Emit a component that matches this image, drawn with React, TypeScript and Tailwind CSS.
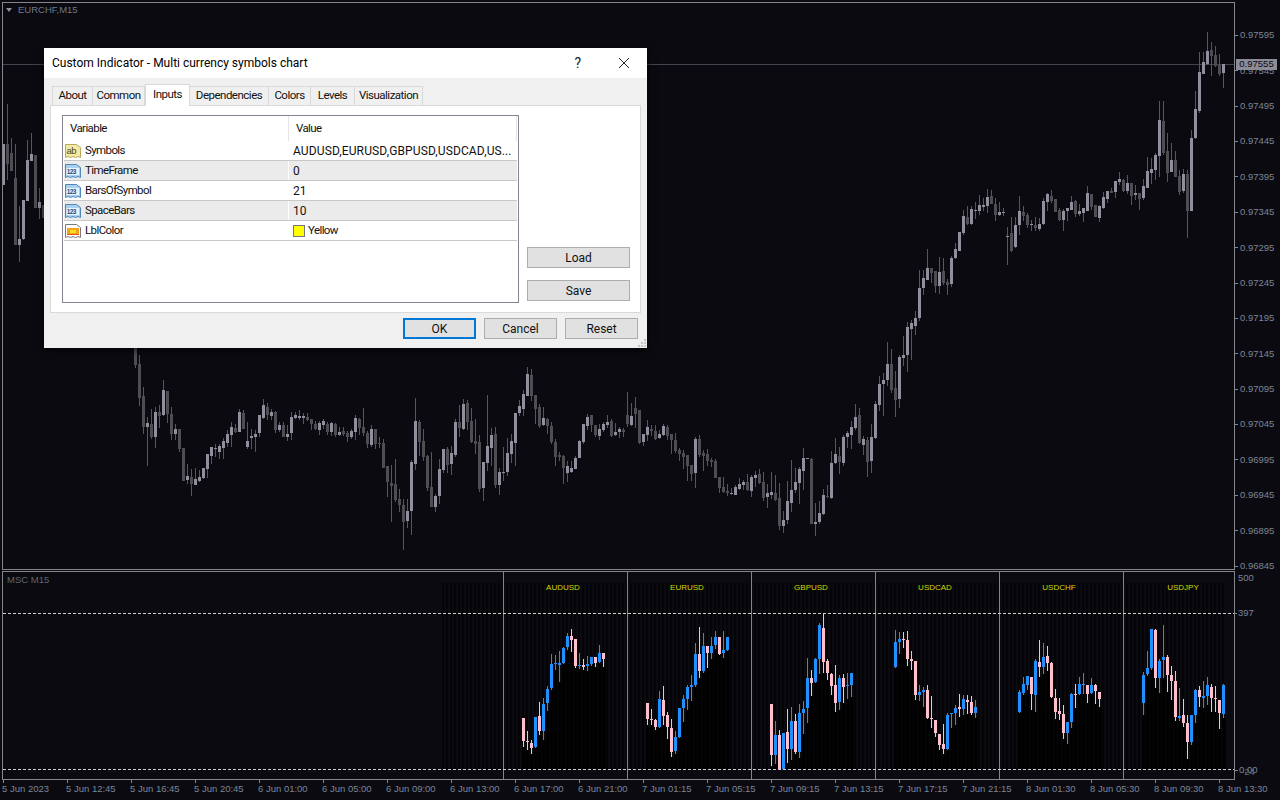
const BG = '#0a0a10';

type Candle = { x: number; k: string; t: number; b: number; wt: number; wb: number };

// one segment per line group: kind, body top, body bottom, wick top, wick bottom (values are 3x zoom px)
function seg(x0: number, y0: number, s: string): Candle[] {
  return s
    .trim()
    .split(',')
    .map((row, i) => {
      const [k, t, b, wt, wb] = row.trim().split(' ');
      return {
        x: x0 + i * 4,
        k,
        t: y0 + Math.round(+t / 3),
        b: y0 + Math.round(+b / 3),
        wt: y0 + Math.round(+wt / 3),
        wb: y0 + Math.round(+wb / 3),
      };
    });
}

const mainCandles: Candle[] = [
  ...seg(3, 0, `l 432 555 432 555,d 432 492 312 540,d 459 513 414 513,d 534 735 432 735,l 717 735 618 786,l 600 717 600 720,l 480 603 420 603,l 462 483 399 483,d 465 624 465 624,l 606 624 564 657,d 615 655 615 655`),
  ...seg(135, 340, `d 24 75 24 84,d 72 174 45 198,d 168 261 141 282,l 249 261 232 378,d 252 291 207 297,l 216 291 201 324,d 216 228 195 264,l 150 225 120 228,d 153 222 153 249,d 222 282 201 300,l 267 282 252 300,d 267 327 267 336,d 324 423 324 423,l 408 420 372 432,d 411 432 387 468,l 417 435 384 435,l 411 423 390 426,l 384 414 384 417,l 342 387 342 414,l 321 348 321 372,l 324 327 312 351,l 318 336 312 357,l 303 324 294 357,l 282 309 270 321,l 261 285 246 321,d 264 276 252 279,l 216 276 207 276,d 219 267 210 267,l 303 321 246 327,l 288 294 267 327,l 282 291 270 336,l 225 279 225 291,l 195 234 177 237,d 201 225 189 240,l 216 228 207 240,d 216 270 213 279,l 255 270 246 276,d 255 291 246 291,l 282 291 255 303,l 231 279 216 300,l 225 234 216 237,l 228 234 210 240,l 228 234 219 252,d 231 240 219 243,d 237 252 237 270,d 252 267 243 270,l 249 270 243 285,l 243 255 237 267,d 252 276 246 285,l 249 276 246 288,d 252 285 249 291,l 276 285 261 288,d 273 282 261 288,d 279 291 273 306,l 273 291 267 297,l 234 276 225 300,d 237 264 234 285,d 261 279 204 288,d 279 312 273 324,l 267 315 255 321,d 267 312 267 327,d 309 312 291 324,d 309 384 297 384,d 378 426 378 471,d 429 438 375 546,d 432 480 357 486,d 477 495 447 516,d 495 546 477 630,l 513 543 477 564,l 366 513 360 585,l 243 372 174 390,d 246 306 240 348,d 303 351 267 363,d 348 444 345 453,d 441 501 336 501,l 468 501 462 516,l 387 468 357 492`),
  ...seg(443, 340, `l 327 390 327 399,d 327 375 321 399,l 339 372 318 405,l 246 345 237 351,d 246 264 195 291,l 192 267 177 270,d 189 246 180 270,d 243 306 204 309,d 303 312 237 342,d 306 447 285 456,l 366 444 366 483,l 318 369 165 393,l 285 324 264 378,d 282 435 261 444,l 396 435 384 465,l 396 399 321 423,l 339 396 294 408,l 303 342 282 369,l 219 309 219 378,l 198 219 180 228,l 162 207 150 228,l 102 168 81 168,d 105 168 87 183,d 165 207 165 252,d 201 258 192 264,l 234 255 201 258,d 237 258 234 282,d 258 306 246 312,d 306 351 297 378,d 345 351 336 363,d 348 384 345 432,l 378 399 363 426,l 384 396 363 399,l 354 387 348 387,l 303 354 300 354,l 252 306 252 312,l 231 258 222 270,d 225 255 225 276,d 255 285 255 291,l 267 288 252 300,l 252 270 246 276,l 246 255 225 264,d 243 288 237 291,l 276 285 249 288,l 267 276 261 294,d 270 276 264 291,d 225 252 156 261,l 228 255 189 258,d 204 222 171 264,d 210 309 210 312,l 282 306 282 318,l 261 285 240 303,d 267 273 255 288,d 273 297 255 300,l 282 294 270 297,l 258 285 252 288,d 261 288 255 300,d 282 300 282 342,d 300 333 279 339,d 330 342 324 363,d 339 351 330 387,d 345 378 345 423,d 375 402 375 423,l 297 399 291 444,d 297 345 285 351,d 339 348 330 393,d 342 363 327 378,d 360 366 354 381,d 363 414 357 414,d 411 444 411 459,d 441 456 411 459,d 453 459 432 468,l 459 462 444 465,l 441 465 435 465,l 432 447 414 450,l 426 435 420 450,d 426 450 402 453,l 411 453 405 471,l 405 414 393 441,d 402 429 387 432,d 426 474 396 483,l 459 471 432 504,l 456 465 396 477,d 459 480 405 483,d 474 558 429 570,l 540 558 513 579,l 483 540 423 552,l 450 489 360 516,l 426 450 384 459,l 387 429 381 492,l 354 393 324 450,l 354 357 354 357,d 357 552 354 552,l 546 552 489 588,l 519 546 483 552,l 465 522 447 525,d 468 471 435 474,l 369 474 333 477,l 342 369 294 372,d 348 366 321 402,l 291 369 285 378,l 279 291 273 324,l 261 285 243 327,l 231 264 192 270,d 225 309 204 312,l 297 315 288 345,d 300 366 291 411,l 291 363 252 399,l 192 294 183 297,l 132 195 108 213`),
  ...seg(883, 180, `l 600 612 579 708,l 552 600 486 618,d 552 630 507 639,d 624 660 573 711,l 531 657 525 684,l 525 534 468 558,l 441 525 426 576,l 429 447 420 540,l 414 438 393 465,l 324 414 270 423,l 294 324 270 345,l 264 300 207 300,d 264 279 264 309,d 273 318 273 339,l 276 318 231 342,d 273 309 234 315,d 306 315 297 345,l 234 312 228 321,l 207 234 189 237,l 156 213 156 213,l 108 159 90 165,d 111 132 78 135,l 87 132 78 135,l 90 93 66 117,l 75 93 45 105,l 75 81 54 93,l 51 78 27 99,d 48 72 30 72,d 72 105 54 123,l 96 105 66 108,l 96 99 84 108,l 168 171 141 255,d 159 213 111 216,l 135 201 111 204,l 93 135 48 165,d 96 108 78 123,d 105 135 99 144,l 132 135 120 153,d 135 144 111 153,l 132 147 114 153,l 63 132 54 135,l 42 66 39 93,d 48 63 30 69,d 57 96 57 96,d 90 120 84 123,l 93 120 87 153,l 84 93 84 123,l 66 90 48 90,d 63 102 60 111,l 93 102 72 108,l 84 99 84 126,l 39 93 18 93,d 42 81 42 90,d 75 111 75 111,l 78 114 75 126,l 51 84 36 87,l 33 57 33 69,d 33 39 24 39,l 3 36 3 54`),
  ...seg(1119, 0, `l 537 546 516 555,d 540 573 537 576,l 549 573 525 582,d 549 588 549 615,l 579 585 555 600,d 579 597 579 630,l 558 594 537 600,l 513 564 471 564,l 507 519 474 552,l 465 510 459 540,l 360 468 303 531,d 363 459 303 465,d 453 519 399 546,l 480 516 429 516,d 480 531 453 531,d 528 576 510 585,l 522 573 507 579,d 522 633 510 714,l 414 633 390 633,l 327 414 273 417,l 216 333 156 339,l 186 222 156 222,l 153 192 96 195,d 150 168 126 228,d 165 198 138 201,d 195 222 162 228,l 192 219 192 264`),
];

const panes = [
  { name: 'AUDUSD', cx: 563, candles: seg(523, 565, `p 459 528 459 546,p 528 531 498 555,p 534 549 525 567,b 456 546 456 549,p 453 498 411 510,b 417 498 399 525,b 372 414 363 438,b 297 369 267 375,b 294 296 270 315,b 294 300 258 351,b 249 294 246 297,b 213 246 204 255,p 213 225 192 261,p 222 303 222 309,b 300 303 264 312,p 300 306 282 315,b 297 303 273 318,b 276 297 276 303,p 276 294 276 306,b 264 291 240 294,p 264 282 264 306`) },
  { name: 'EURUSD', cx: 687, candles: seg(647, 565, `p 414 462 414 480,p 462 465 432 480,p 465 486 462 495,b 402 486 378 489,p 405 453 363 480,p 450 486 441 522,p 489 561 462 576,b 516 558 498 567,b 429 516 429 519,b 402 429 390 471,b 366 402 360 435,b 360 366 330 408,b 267 360 234 366,p 267 318 186 339,b 243 318 204 324,p 243 264 243 309,b 243 264 216 282,b 216 240 198 252,p 216 267 216 270,b 255 264 198 279,b 216 255 216 258`) },
  { name: 'GBPUSD', cx: 811, candles: seg(771, 565, `p 417 570 417 603,b 510 570 468 597,p 510 613 495 613,b 504 613 504 613,p 501 552 432 594,b 468 552 426 585,p 468 561 447 567,b 444 561 417 579,b 432 444 408 507,b 339 429 279 474,p 339 354 315 393,b 282 351 279 354,b 180 282 174 327,p 189 291 147 324,p 288 324 282 345,p 327 363 324 390,p 360 414 300 441,b 339 411 330 435,p 339 366 327 414,b 360 363 324 402,b 324 360 324 396`) },
  { name: 'USDCAD', cx: 935, candles: seg(895, 565, `b 231 306 195 309,b 222 231 201 267,p 222 224 201 249,p 225 282 198 303,p 282 288 258 315,p 288 390 288 405,b 381 390 360 408,b 375 381 366 426,p 375 459 360 462,p 459 462 393 489,p 465 504 465 516,p 507 540 507 555,p 537 552 477 567,b 450 552 444 555,b 444 447 444 489,b 429 444 420 480,p 426 432 387 456,b 402 432 390 450,p 405 411 390 447,p 411 444 393 450,b 426 444 405 459`) },
  { name: 'USDCHF', cx: 1059, candles: seg(1019, 565, `b 381 441 375 444,b 357 384 336 390,b 333 360 333 375,p 336 387 336 435,b 288 390 282 441,p 291 306 225 336,b 276 306 234 327,p 273 294 243 318,p 294 396 291 399,p 399 441 372 462,p 438 447 399 465,p 447 504 420 522,b 471 504 471 537,b 387 471 384 489,p 387 390 357 429,b 357 387 336 390,b 357 360 324 387,p 360 387 360 414,b 360 384 339 387,p 360 378 357 417,p 381 402 381 426`) },
  { name: 'USDJPY', cx: 1183, candles: seg(1143, 565, `b 330 414 321 450,b 309 327 258 333,b 192 309 192 315,p 195 339 192 369,b 288 339 282 384,b 276 285 180 339,p 276 330 270 381,p 330 348 303 405,p 348 456 318 468,b 453 459 369 468,p 450 474 402 486,p 474 531 450 582,b 450 531 450 540,b 375 450 372 474,p 375 396 363 426,b 393 399 348 429,b 360 393 336 420,p 366 399 357 441,p 399 402 363 441,p 405 444 405 492,b 360 447 357 459`) },
];

const subCandles = panes.flatMap((p) => p.candles);
const stripes = Array.from({ length: 196 }, (_, i) => 443 + i * 4);

const prices = ['0.97595', '0.97545', '0.97495', '0.97445', '0.97395', '0.97345', '0.97295', '0.97245', '0.97195', '0.97145', '0.97095', '0.97045', '0.96995', '0.96945', '0.96895', '0.96845'];
const times = ['5 Jun 2023', '5 Jun 12:45', '5 Jun 16:45', '5 Jun 20:45', '6 Jun 01:00', '6 Jun 05:00', '6 Jun 09:00', '6 Jun 13:00', '6 Jun 17:00', '6 Jun 21:00', '7 Jun 01:15', '7 Jun 05:15', '7 Jun 09:15', '7 Jun 13:15', '7 Jun 17:15', '7 Jun 21:15', '8 Jun 01:30', '8 Jun 05:30', '8 Jun 09:30', '8 Jun 13:30'];
const tabs = ['About', 'Common', 'Inputs', 'Dependencies', 'Colors', 'Levels', 'Visualization'];
const tabWidths = ['w-[41px]', 'w-[52px]', 'w-[45px]', 'w-[79px]', 'w-[42px]', 'w-[44px]', 'w-[68px]'];

function MainChart() {
  return (
    <svg viewBox="3 3 1231 566" width={1231} height={566} shapeRendering="crispEdges" className="block">
      <rect x={3} y={64} width={1231} height={1} fill="#44444e" />
      {mainCandles.map((c) => (
        <g key={c.x}>
          <rect x={c.x} y={c.wt} width={1} height={Math.max(1, c.wb - c.wt)} fill="#56565c" />
          <rect x={c.x - 1} y={c.t} width={3} height={Math.max(1, c.b - c.t)} fill={c.k === 'l' ? '#8f8f9e' : '#4e4e52'} />
        </g>
      ))}
    </svg>
  );
}

function SubChart() {
  return (
    <svg viewBox="3 572 1231 207" width={1231} height={207} shapeRendering="crispEdges" className="block">
      {stripes.map((x) => (
        <rect key={x} x={x - 1} y={583} width={2} height={186} fill="#040407" />
      ))}
      {subCandles.map((c) => (
        <g key={c.x}>
          <rect x={c.x - 1} y={c.wb} width={4} height={769 - c.wb} fill="#06060a" />
          <rect x={c.x - 1} y={c.wb} width={3} height={769 - c.wb} fill="#000" />
        </g>
      ))}
      {[503, 627, 751, 875, 999, 1123].map((x) => (
        <rect key={x} x={x} y={572} width={1} height={207} fill="#85858c" />
      ))}
      <path d="M3 613.5H1234M3 769.5H1234" stroke="#d0d0d0" strokeDasharray="3 2" fill="none" />
      {subCandles.map((c) => {
        const col = c.k === 'p' ? '#ffc0cb' : '#1e90ff';
        return (
          <g key={c.x}>
            <rect x={c.x} y={c.wt} width={1} height={Math.max(1, c.wb - c.wt)} fill={col} />
            <rect x={c.x - 1} y={c.t} width={3} height={Math.max(1, c.b - c.t)} fill={col} />
          </g>
        );
      })}
      {panes.map((p) => (
        <text key={p.name} x={p.cx} y={590} textAnchor="middle" fontSize={8} fill="#d4d800" fontFamily="'Liberation Sans', sans-serif" shapeRendering="auto">
          {p.name}
        </text>
      ))}
    </svg>
  );
}

function DocIcon({ kind }: { kind: 'ab' | 'num' | 'color' }) {
  const fill = kind === 'ab' ? '#f5e9a6' : kind === 'num' ? '#a9d0ef' : '#ffffff';
  const stroke = kind === 'ab' ? '#b9a95c' : kind === 'num' ? '#4f86b5' : '#7a7a7a';
  return (
    <svg width={16} height={16} viewBox="0 0 16 16" className="shrink-0">
      <path d="M0.5 1.5H11.5L15.5 4.5V14.5L13 13.5L10.5 14.5L8 13.5L5.5 14.5L3 13.5L0.5 14.5Z" fill={fill} stroke={stroke} />
      {kind === 'ab' && (
        <text x={1.5} y={11} fontSize={9.5} fill="#4a4a20" fontFamily="'Liberation Sans', sans-serif">ab</text>
      )}
      {kind === 'num' && (
        <>
          <rect x={1.5} y={5} width={12.5} height={7} fill="#e8f3fb" />
          <text x={1.8} y={11} fontSize={6.5} fontWeight={700} fill="#1d4f80" fontFamily="'Liberation Sans', sans-serif">123</text>
        </>
      )}
      {kind === 'color' && (
        <>
          <rect x={2} y={5} width={12} height={6} fill="#f7a21b" />
          <rect x={5} y={7} width={6} height={3} fill="#f2e21a" />
          <rect x={2} y={11} width={12} height={1} fill="#e8501a" />
        </>
      )}
    </svg>
  );
}

const rows: { name: string; value: string; icon: 'ab' | 'num' | 'color' }[] = [
  { name: 'Symbols', value: 'AUDUSD,EURUSD,GBPUSD,USDCAD,US...', icon: 'ab' },
  { name: 'TimeFrame', value: '0', icon: 'num' },
  { name: 'BarsOfSymbol', value: '21', icon: 'num' },
  { name: 'SpaceBars', value: '10', icon: 'num' },
  { name: 'LblColor', value: 'Yellow', icon: 'color' },
];

function Btn({ label, primary, wide }: { label: string; primary?: boolean; wide?: boolean }) {
  return (
    <button
      className={`flex h-[21px] items-center justify-center bg-[#e1e1e1] text-[12px] text-[#111] ${wide ? 'w-[103px]' : 'w-[73px]'} ${primary ? 'border-2 border-[#0078d7]' : 'border border-[#adadad]'}`}
    >
      {label}
    </button>
  );
}

function Dialog() {
  return (
    <div className="absolute left-[44px] top-[48px] flex h-[300px] w-[603px] flex-col bg-[#f0f0f0] font-['Roboto',sans-serif] text-[12px] text-[#111] shadow-[0_2px_8px_rgba(0,0,0,0.7)]">
      <div className="flex h-[30px] shrink-0 items-center bg-white pl-[8px]">
        <span className="text-[12px] text-black">Custom Indicator - Multi currency symbols chart</span>
        <span className="ml-auto mr-[37px] text-[14px] text-[#222]">?</span>
        <svg width={12} height={12} viewBox="0 0 12 12" className="mr-[17px]">
          <path d="M1 1L11 11M11 1L1 11" stroke="#222" strokeWidth={1} />
        </svg>
      </div>
      <div className="flex h-[27px] shrink-0 items-end pl-[8px] text-[11.5px] tracking-[-0.5px]">
        {tabs.map((t, i) => (
          <div
            key={t}
            className={`flex items-center justify-center border border-[#d9d9d9] ${tabWidths[i]} ${t === 'Inputs' ? 'relative z-10 -mb-px h-[22px] border-b-0 bg-white pb-[2px]' : 'h-[19px] border-b-0 border-l-0 bg-[#f0f0f0] first:border-l'}`}
          >
            {t}
          </div>
        ))}
      </div>
      <div className="mx-[6px] flex h-[208px] shrink-0 border border-[#d9d9d9] bg-white pl-[11px] pt-[9px]">
        <div className="h-[188px] w-[457px] shrink-0 border border-[#82878f]">
          <div className="flex h-[25px] items-center text-[11.5px] tracking-[-0.6px]">
            <div className="flex h-full w-[226px] items-center border-r border-[#e5e5e5] pl-[7px]">Variable</div>
            <div className="flex h-full w-[228px] items-center border-r border-[#e5e5e5] pl-[7px]">Value</div>
          </div>
          {rows.map((r, i) => (
            <div
              key={r.name}
              className={`ml-px mr-px flex h-[20px] items-center border-b border-[#c8c8c8] ${i % 2 === 1 ? 'bg-[#ebebeb]' : 'bg-white'}`}
            >
              <div className="flex h-full w-[225px] items-center gap-[4px] border-r border-white pl-[1px] text-[11.5px] tracking-[-0.6px]">
                <DocIcon kind={r.icon} />
                {r.name}
              </div>
              <div className={`flex h-full items-center gap-[3px] pl-[4px] ${r.icon === 'color' ? 'text-[11.5px] tracking-[-0.6px]' : 'tracking-[0.12px]'}`}>
                {r.icon === 'color' && <span className="h-[12px] w-[12px] border border-[#777] bg-[#ffff00]" />}
                {r.value}
              </div>
            </div>
          ))}
        </div>
        <div className="ml-[8px] flex flex-col gap-[12px] pt-[132px]">
          <Btn label="Load" wide />
          <Btn label="Save" wide />
        </div>
      </div>
      <div className="mt-[5px] flex justify-end gap-[8px] pr-[9px]">
        <Btn label="OK" primary />
        <Btn label="Cancel" />
        <Btn label="Reset" />
      </div>
      <svg width={9} height={9} viewBox="0 0 9 9" className="absolute bottom-[1px] right-[1px]" shapeRendering="crispEdges">
        <path d="M7 1h2v2H7zM4 4h2v2H4zM7 4h2v2H7zM1 7h2v2H1zM4 7h2v2H4zM7 7h2v2H7z" fill="#c4c4c4" />
      </svg>
    </div>
  );
}

export default function App() {
  return (
    <div className="relative flex h-[800px] w-[1280px] flex-col overflow-hidden bg-[#0a0a10] font-['Liberation_Sans',sans-serif] text-[9.5px] text-[#7c8698]" style={{ backgroundColor: BG }}>
      <div className="flex h-[570px] shrink-0 pt-[2px]">
        <div className="relative ml-[2px] h-[568px] w-[1233px] shrink-0 border border-[#85858c]">
          <MainChart />
          <div className="absolute left-[3px] top-0 flex items-center gap-[6px] text-[#6f7988]">
            <span className="h-0 w-0 border-x-[3px] border-t-[4px] border-x-transparent border-t-[#8a8f98]" />
            EURCHF,M15
          </div>
        </div>
        <div className="relative flex flex-col pt-[15.6px]">
          {prices.map((p) => (
            <div key={p} className="flex h-[35.4px] shrink-0 items-center gap-[2px]">
              <span className="h-px w-[3px] bg-[#85858c]" />
              {p}
            </div>
          ))}
          <div className="absolute left-[1px] top-[57px] flex h-[11px] w-[41px] items-center justify-center bg-[#8c8c98] text-[#0a0a10]">
            0.97555
          </div>
        </div>
      </div>
      <div className="mt-px flex h-[209px] shrink-0">
        <div className="relative ml-[2px] w-[1233px] shrink-0 border border-[#85858c]">
          <SubChart />
          <span className="absolute left-[4px] top-[1px] text-[#5f6672]">MSC M15</span>
        </div>
        <div className="relative flex-1">
          <div className="flex h-[14px] items-center pl-[3px]">500</div>
          <div className="mt-[21px] flex h-[14px] items-center gap-[1px]">
            <span className="h-px w-[2px] bg-[#85858c]" />397
          </div>
          <div className="mt-[143px] flex h-[14px] items-center gap-[1px]">
            <span className="h-px w-[3px] bg-[#85858c]" />0.00
          </div>
          <span className="absolute left-[6px] top-[194px] text-[#6b6f78]">-24</span>
        </div>
      </div>
      <div className="flex flex-1 pl-[2px]">
        {times.map((t) => (
          <div key={t} className="flex w-[64px] shrink-0 flex-col whitespace-nowrap">
            <span className="ml-px h-[3px] w-px shrink-0 bg-[#85858c]" />
            <span className="-mt-[1px]">{t}</span>
          </div>
        ))}
      </div>
      <Dialog />
    </div>
  );
}
